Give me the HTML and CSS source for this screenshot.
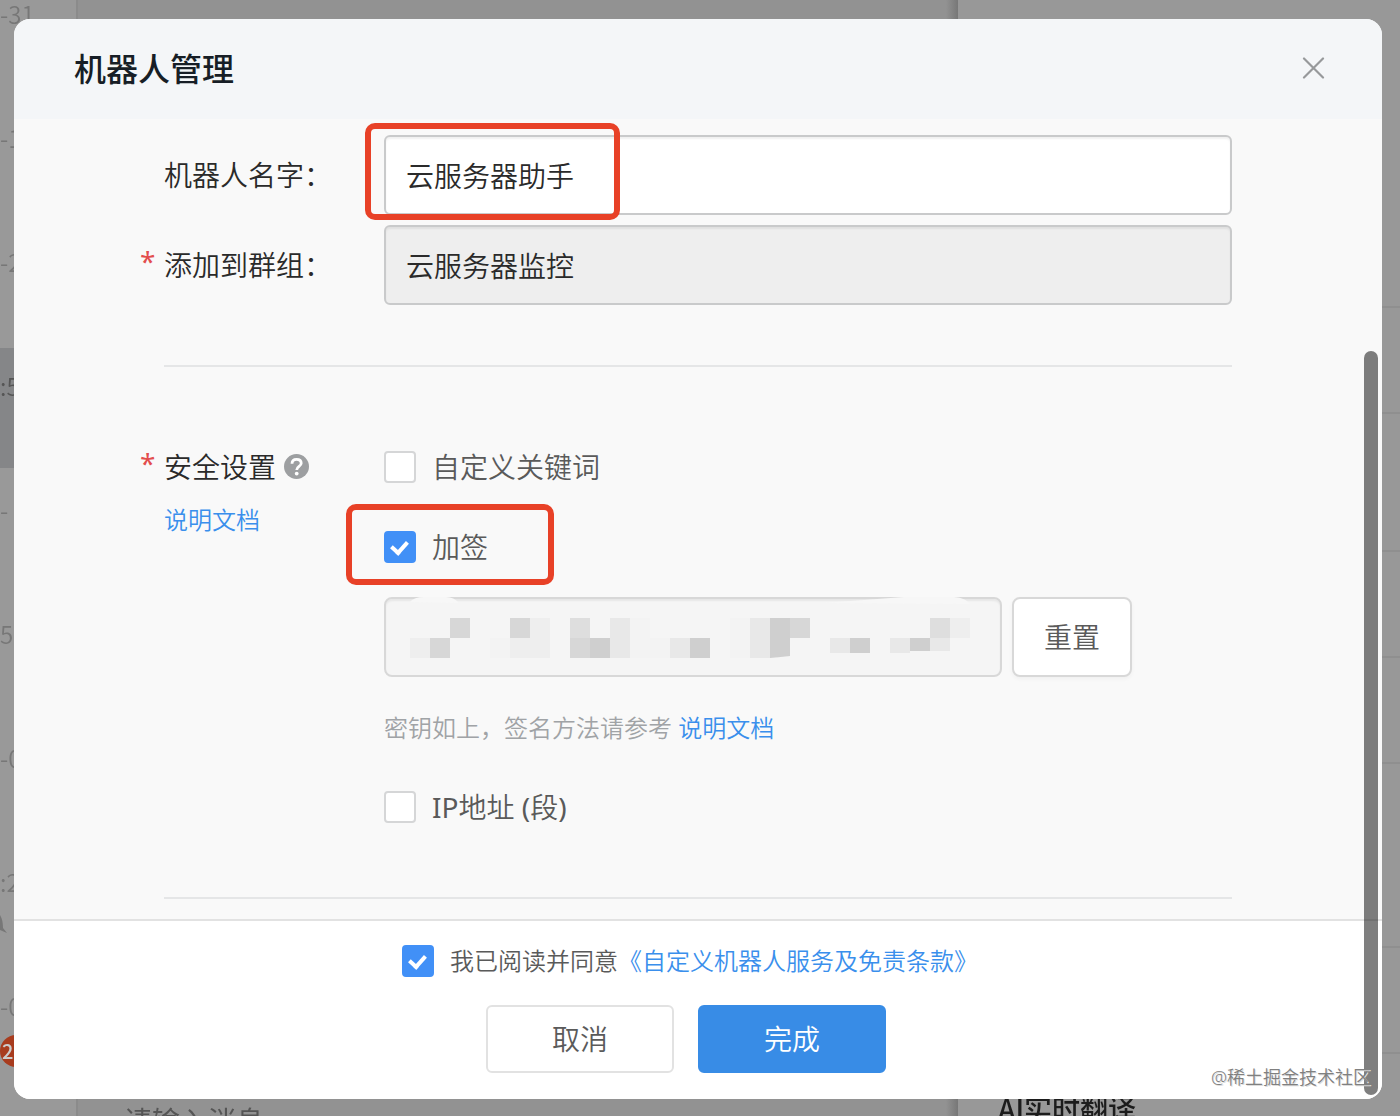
FILE: index.html
```html
<!DOCTYPE html>
<html lang="zh-CN">
<head>
    <meta charset="UTF-8">
    <meta name="viewport" content="width=device-width, initial-scale=1.0">
    <title>机器人管理</title>
    <link rel="stylesheet" href="styles.css">
</head>
<body>
    <!-- Dimmed chat window behind the dialog -->
    <div class="app" aria-hidden="true">
        <div class="chat-list">
            <div class="chat-item">-31</div>
            <div class="chat-item">-1</div>
            <div class="chat-item">-2</div>
            <div class="chat-item selected">:5</div>
            <div class="chat-item">-</div>
            <div class="chat-item">5:2</div>
            <div class="chat-item">-0</div>
            <div class="chat-item">:2
                <svg class="mute-icon" width="8" height="24" viewBox="0 0 8 24"><path d="M0 3 Q3 8 3 16 L7 21 L0 18 Z" fill="#777"/></svg>
            </div>
            <div class="chat-item">-0<span class="badge">2</span></div>
        </div>
        <div class="chat-main">
            <div class="chat-input">请输入消息</div>
        </div>
        <div class="chat-side">
            <div class="side-row first"></div>
            <div class="side-row"></div>
            <div class="side-row tall"></div>
            <div class="side-row"></div>
            <div class="side-row"></div>
            <div class="side-row group"></div>
            <div class="side-row"></div>
            <div class="side-title">AI实时翻译</div>
        </div>
    </div>

    <div class="modal" role="dialog" aria-labelledby="modal-title">
        <header class="modal-header">
            <h1 id="modal-title">机器人管理</h1>
            <button class="close" type="button" aria-label="关闭">
                <svg width="24" height="24" viewBox="0 0 24 24"><path d="M2 1.500 L21 20.500 M21 1.500 L2 20.500" stroke="#97999b" stroke-width="2.200" stroke-linecap="round" fill="none"/></svg>
            </button>
        </header>

        <div class="modal-body">
            <div class="row">
                <label class="label" for="name">机器人名字：</label>
                <div class="field">
                    <input class="text-input" id="name" type="text" value="云服务器助手">
                    <div class="mark mark-name"></div>
                </div>
            </div>
            <div class="row">
                <label class="label" for="group"><span class="star">*</span>添加到群组：</label>
                <div class="field">
                    <input class="text-input" id="group" type="text" value="云服务器监控" disabled>
                </div>
            </div>

            <hr>

            <div class="row security">
                <div class="security-side">
                    <div class="label">
                        <span class="star">*</span>安全设置
                        <svg class="help" width="26" height="26" viewBox="0 0 26 26">
                            <circle cx="12.500" cy="12.500" r="12.500" fill="#9d9fa1"/>
                            <path d="M8 9.800 C8 7 10 5.400 12.600 5.400 C15.400 5.400 17.200 7 17.200 9.300 C17.200 12.400 12.700 12.400 12.700 15.900" fill="none" stroke="#fff" stroke-width="2.800"/>
                            <circle cx="12.700" cy="19.600" r="1.900" fill="#fff"/>
                        </svg>
                    </div>
                    <a class="doc-link" href="#">说明文档</a>
                </div>
                <div class="options">
                    <label class="option"><input class="check" type="checkbox">自定义关键词</label>
                    <div class="sign">
                        <label class="option"><input class="check" type="checkbox" checked>加签</label>
                        <div class="mark mark-sign"></div>
                    </div>
                    <div class="secret">
                        <div class="secret-field">
                            <input class="text-input" type="text" aria-label="密钥" readonly>
                            <svg class="mosaic" width="618" height="80" viewBox="0 0 618 80" preserveAspectRatio="xMinYMin">
                                <path d="M26 5 Q30 0 40 0 H62 Q70 0 75 6 Z M440 6 L520 0 H570 Q582 1 586 7 Z" fill="#f7f7f7"/>
                                <path d="M246 21h20v40h-20z M266 41h20v20h-20z M106 41h20v20h-20z M346 21h20v40h-20z" fill="#f3f3f3"/>
                                <path d="M26 41h20v20h-20z M126 41h20v20h-20z M146 21h20v40h-20z M566 21h20v20h-20z" fill="#eeeeee"/>
                                <path d="M226 21h20v40h-20z M286 41h20v20h-20z M446 41h20v15h-20z M546 41h20v13h-20z M366 21h20v40h-20z M506 41h20v15h-20z" fill="#e8e8e8"/>
                                <path d="M186 21h20v20h-20z M546 21h20v20h-20z" fill="#dedede"/>
                                <path d="M66 21h20v20h-20z M46 41h20v20h-20z M126 21h20v20h-20z M186 41h20v20h-20z M406 21h20v20h-20z" fill="#d7d7d7"/>
                                <path d="M206 41h20v20h-20z M306 41h20v20h-20z M386 21h20v38l-20 2z M466 41h20v15h-20z M526 41h20v13h-20z" fill="#cfcfcf"/>
                            </svg>
                        </div>
                        <button class="btn reset" type="button">重置</button>
                    </div>
                    <p class="hint">密钥如上，签名方法请参考 <a href="#">说明文档</a></p>
                    <label class="option"><input class="check" type="checkbox"><span><span class="latin">IP</span>地址<span class="latin"> (</span>段<span class="latin">)</span></span></label>
                </div>
            </div>

            <hr>
        </div>

        <footer class="modal-footer">
            <div class="agreement">
                <input class="check" id="agree" type="checkbox" checked>
                <label for="agree">我已阅读并同意</label><a href="#">《自定义机器人服务及免责条款》</a>
            </div>
            <div class="actions">
                <button class="btn" type="button">取消</button>
                <button class="btn primary" type="button">完成</button>
            </div>
        </footer>

        <div class="scrollbar"></div>
        <div class="watermark">@稀土掘金技术社区</div>
    </div>
</body>
</html>
```

FILE: styles.css
```css
* { box-sizing: border-box; }
body {
    margin: 0;
    height: 100vh;
    display: flex;
    padding: 19px 18px 17px 14px;
    overflow: hidden;
    font-family: "Noto Sans", "Noto Sans CJK SC", sans-serif;
    font-size: 28px;
    font-weight: 350;
    line-height: 32px;
    color: #2a2a2a;
    background-color: #999;
}
a { color: #3a8fec; text-decoration: none; }
input, button { font: inherit; color: inherit; }
button { cursor: pointer; }

/* chat window */
.app { position: fixed; inset: 0; display: flex; overflow: hidden; font-family: "Noto Sans CJK SC", sans-serif; }
.chat-list { width: 78px; border-right: 2px solid #8b8b8b; margin-top: -24px; flex-shrink: 0; }
.chat-item { position: relative; height: 120px; margin-bottom: 4px; padding-top: 22px; font-size: 24px; color: #777; }
.chat-item.selected { background-color: #858688; color: #555; }
.mute-icon { position: absolute; left: 0; top: 68px; }
.badge {
    position: absolute; left: 0; top: 67px; width: 32px; height: 32px;
    border-radius: 16px; background-color: #a83c1e; color: #ccc;
    font-size: 20px; font-weight: 500; padding-left: 2px;
}
.chat-main { flex: 1; display: flex; align-items: flex-end; background: linear-gradient(to left, #777, #929292 12px); }
.chat-input { margin: 0 0 -24px 46px; color: #555; line-height: 40px; font-weight: 400; }
.chat-side { width: 442px; display: flex; flex-direction: column; background-color: #989898; }
.side-row { height: 106px; border-bottom: 2px solid #8f8f8f; flex-shrink: 0; }
.side-row.first { height: 308px; }
.side-row.tall { height: 138px; }
.side-row.group { height: 184px; }
.side-title { margin: auto 0 -12px 40px; line-height: 40px; font-weight: 500; color: #1c1c1c; }

/* dialog */
.modal {
    position: relative;
    flex: 1;
    display: flex;
    flex-direction: column;
    border-radius: 16px;
    overflow: hidden;
    background-color: #f9f9f9;
}
.modal-header {
    height: 100px;
    flex-shrink: 0;
    display: flex;
    align-items: center;
    justify-content: space-between;
    padding: 0 52px 0 60px;
    background-color: #f4f6f8;
}
.modal-header h1 { margin: 0; font-size: 32px; line-height: 40px; font-weight: 500; color: #171e26; }
.close { display: flex; padding: 4px; border: none; background: none; }
.modal-body { flex: 1; min-height: 0; overflow: hidden; padding: 16px 150px 0; }
.row { display: grid; grid-template-columns: 220px 1fr; align-items: center; margin-bottom: 10px; }
.label { display: flex; align-items: center; }
.star { width: 24px; margin-left: -24px; padding-bottom: 8px; color: #e34d4d; font-weight: 400; line-height: 24px; }
.help { margin-left: 8px; }
.field, .sign, .secret-field { position: relative; }
.text-input {
    display: block;
    width: 100%;
    height: 80px;
    padding: 0 20px;
    border: 2px solid #c9cacb;
    border-radius: 6px;
    background-color: #fff;
    box-shadow: inset 0 2px 2px rgba(0,0,0,0.06);
}
.text-input:disabled { background-color: #eee; color: #2a2a2a; }
hr { height: 2px; margin: 60px 0 0; border: none; background-color: #e5e6e7; }

.security { align-items: start; margin: 84px 0 74px; }
.security + hr { margin-top: 0; }
.doc-link { display: inline-block; margin-top: 21px; font-size: 24px; }
.options { display: flex; flex-direction: column; color: #5a5a5a; }
.option { display: flex; align-items: center; gap: 16px; }
.latin { font-weight: 400; white-space: pre; }
.check {
    appearance: none;
    position: relative;
    width: 32px;
    height: 32px;
    margin: 0;
    flex-shrink: 0;
    border: 2px solid #d5d6d7;
    border-radius: 4px;
    background-color: #fff;
}
.check:checked { border-color: #4190f7; background-color: #4190f7; }
.check:checked::after {
    content: "";
    position: absolute;
    left: 8px;
    top: 5px;
    width: 7px;
    height: 12px;
    border: solid #fff;
    border-width: 0 4px 4px 0;
    transform: rotate(42deg);
}
.sign { margin: 48px 0 34px; }
.secret { display: flex; gap: 10px; max-width: 748px; }
.secret-field { flex: 1; }
.secret .text-input { background-color: #f5f5f5; border-color: #d8d8d8; border-radius: 8px; }
.mosaic { position: absolute; left: 0; top: 0; }
.btn {
    width: 188px;
    height: 68px;
    padding: 0;
    border: 2px solid #e2e2e2;
    border-radius: 6px;
    background-color: #fff;
    color: #5a5a5a;
}
.btn.primary { border-color: #388ce6; background-color: #388ce6; color: #fff; }
.btn.reset { width: 120px; height: 80px; border-color: #d8d8d8; border-radius: 8px; box-shadow: 0 2px 4px rgba(0,0,0,0.04); }
.hint { margin: 35px 0 47px; font-size: 24px; color: #a0a3a6; }

/* red boxes round the important fields */
.mark { position: absolute; border: 6px solid #e84127; border-radius: 10px; pointer-events: none; }
.mark-name { left: -19px; top: -12px; width: 255px; height: 97px; }
.mark-sign { left: -38px; top: -27px; width: 208px; height: 81px; }

.modal-footer {
    flex-shrink: 0;
    display: flex;
    flex-direction: column;
    align-items: center;
    gap: 28px;
    padding: 24px 0 26px;
    border-top: 2px solid #e2e2e2;
    background-color: #fff;
}
.agreement { display: flex; align-items: center; margin-right: 16px; font-size: 24px; color: #5a5a5a; }
.agreement .check { margin-right: 16px; }
.actions { display: flex; gap: 24px; margin-right: 24px; }

.scrollbar { position: absolute; right: 4px; top: 332px; bottom: 4px; width: 14px; border-radius: 7px; background-color: rgba(0,0,0,0.5); }
.watermark { position: absolute; right: 11px; bottom: 6px; font-size: 18px; color: #808080; text-shadow: 1px 1px 0 #ddd; }
```
